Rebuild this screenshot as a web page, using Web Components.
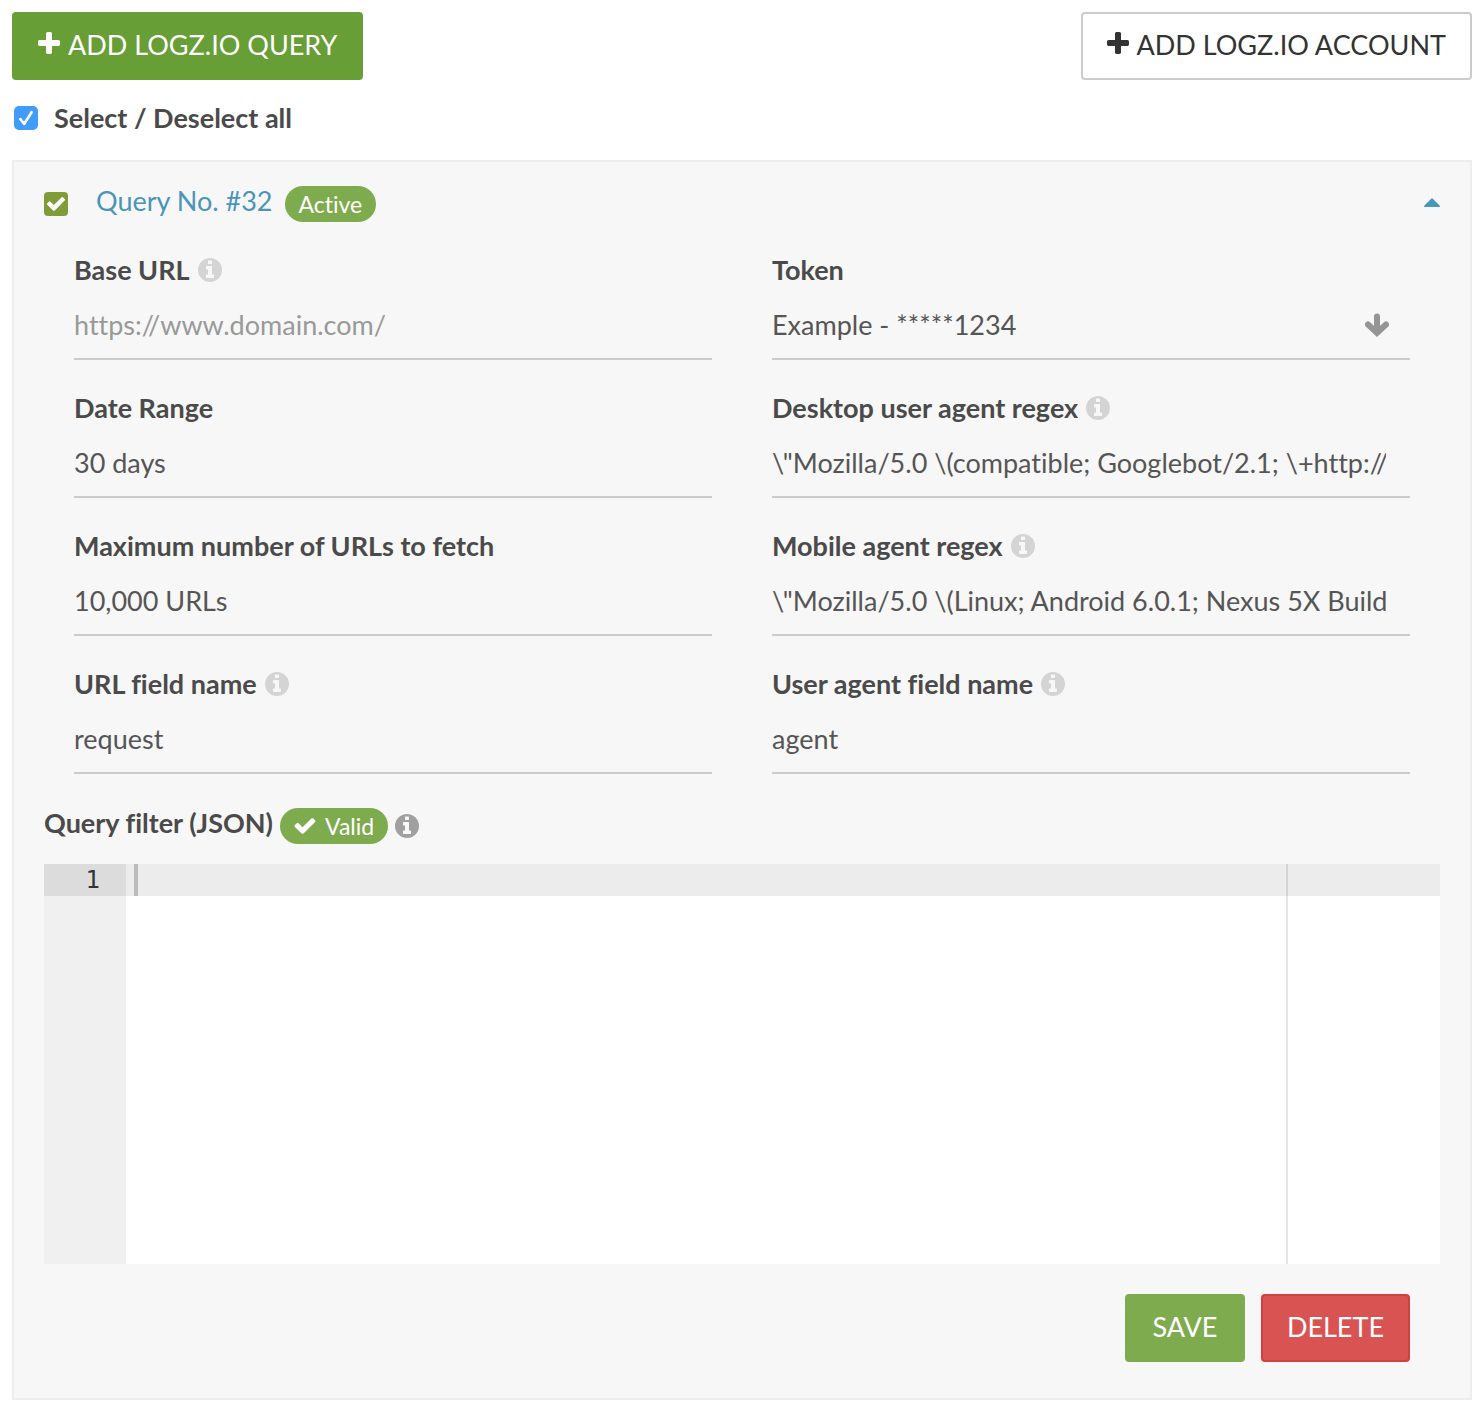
<!DOCTYPE html>
<html lang="en">
<head>
<meta charset="utf-8">
<meta name="viewport" content="width=device-width, initial-scale=1">
<title>Logz.io queries</title>
<style>
  body { margin: 0; background: #fff; color: #4a4a4a; font: 27px/32px Lato, "Open Sans", sans-serif; font-variant-ligatures: none; }
</style>
</head>
<body>
<query-page></query-page>
<script>
const ICONS = {
  plus: ['192 128 1408 1408', 'M1600 736v192q0 40-28 68t-68 28h-416v416q0 40-28 68t-68 28h-192q-40 0-68-28t-28-68v-416h-416q-40 0-68-28t-28-68v-192q0-40 28-68t68-28h416v-416q0-40 28-68t68-28h192q40 0 68 28t28 68v416h416q40 0 68 28t28 68z'],
  check: ['121 334 1550 1188', 'M1671 566q0 40-28 68l-724 724-136 136q-28 28-68 28t-68-28l-136-136-362-362q-28-28-28-68t28-68l136-136q28-28 68-28t68 28l294 295 656-657q28-28 68-28t68 28l136 136q28 28 28 68z'],
  info: ['128 128 1536 1536', 'M128 896a768 768 0 1 0 1536 0a768 768 0 1 0-1536 0zM1152 1376v-160q0-14-9-23t-23-9h-96v-512q0-14-9-23t-23-9h-320q-14 0-23 9t-9 23v160q0 14 9 23t23 9h96v320h-96q-14 0-23 9t-9 23v160q0 14 9 23t23 9h448q14 0 23-9t9-23zM1024 480v-160q0-14-9-23t-23-9h-192q-14 0-23 9t-9 23v160q0 14 9 23t23 9h192q14 0 23-9t9-23z'],
  caret: ['0 0 16 9', 'M8 0L15.6 7.6Q16.2 9 15 9H1Q-.2 9 .4 7.6z']
};

class Base extends HTMLElement {
  connectedCallback() {
    if (this.shadowRoot) return;
    this.attachShadow({ mode: 'open' }).innerHTML =
      `<style>*{box-sizing:border-box}${this.css()}</style>${this.html()}`;
  }
  attr(name) { return (this.getAttribute(name) || '').replace(/&/g, '&amp;').replace(/"/g, '&quot;'); }
}

customElements.define('ui-icon', class extends Base {
  css() { return `:host{display:block;flex:none}svg{display:block;width:100%;height:100%;fill:currentColor;fill-rule:evenodd}`; }
  html() {
    const [box, d] = ICONS[this.getAttribute('name')];
    return `<svg viewBox="${box}" aria-hidden="true"><path d="${d}"/></svg>`;
  }
});

customElements.define('ui-button', class extends Base {
  css() { return `
    :host{display:block}
    button{display:flex;align-items:center;justify-content:center;gap:8px;min-width:120px;height:68px;padding:0 24px 2px;
      border:2px solid #679e36;border-radius:4px;background:#679e36;color:#fff;font:inherit;white-space:nowrap;cursor:pointer}
    ui-icon{width:22px;height:22px;margin-bottom:4px}
    :host([kind=default]) button{background:#fff;border-color:#ccc;color:#333}
    :host([kind=save]) button{background:#7fab4f;border-color:#7fab4f}
    :host([kind=danger]) button{background:#d95353;border-color:#d43f3f}`; }
  html() {
    const icon = this.getAttribute('icon');
    return `<button type="button">${icon ? `<ui-icon name="${icon}"></ui-icon>` : ''}<slot></slot></button>`;
  }
});

customElements.define('ui-check', class extends Base {
  css() { return `
    :host{display:block;font-weight:700}
    label{display:flex;align-items:center;gap:16px}
    .box{display:grid;width:24px;height:24px}
    input,svg,ui-icon{grid-area:1/1}
    input{appearance:none;width:24px;height:24px;margin:0;border-radius:5px;background:#419bf9}
    svg{width:24px;height:24px;fill:none;stroke:#fff;stroke-width:2.6;stroke-linecap:round;stroke-linejoin:round;pointer-events:none}
    ui-icon{place-self:center;width:18px;height:14px;color:#fff;pointer-events:none}
    :host([kind=green]) input{background:#809c38;border-radius:4px}`; }
  html() {
    const mark = this.getAttribute('kind') === 'green'
      ? '<ui-icon name="check"></ui-icon>'
      : '<svg viewBox="0 0 24 24"><path d="M6.3 13.2L10.3 17.8L17.6 6.2"/></svg>';
    return `<label><span class="box"><input type="checkbox" checked aria-label="${this.attr('name')}">${mark}</span><slot></slot></label>`;
  }
});

customElements.define('ui-badge', class extends Base {
  css() { return `
    :host{display:flex;align-items:center;gap:9px;height:36px;padding:0 14px;border-radius:18px;background:#7fab4f;color:#fff;
      font-size:23px;font-weight:400;white-space:nowrap}
    ui-icon{width:22px;height:16px}`; }
  html() {
    const icon = this.getAttribute('icon');
    return `${icon ? `<ui-icon name="${icon}"></ui-icon>` : ''}<slot></slot>`;
  }
});

customElements.define('ui-field', class extends Base {
  css() { return `
    :host{display:block;min-width:0}
    .head{display:flex;align-items:center;gap:8px;height:32px;margin-bottom:6px}
    label{font-weight:700;white-space:nowrap}
    .head ui-icon{width:24px;height:24px;color:#d4d4d4}
    .control{display:grid;align-items:center;height:68px;padding-right:24px;border-bottom:2px solid #ccc}
    input,select,svg{grid-area:1/1}
    input,select{appearance:none;width:100%;height:64px;margin:0;padding:0;border:0;border-radius:0;outline:0;
      background:none;color:#555;font:inherit;font-variant-ligatures:none}
    input{padding-bottom:2px}
    input::placeholder{color:#999;opacity:1}
    svg{justify-self:end;width:24px;height:24px;margin-right:-3px;fill:none;stroke:#959595;stroke-width:6;stroke-linecap:round;pointer-events:none}`; }
  html() {
    const hint = this.hasAttribute('hint') ? '<ui-icon name="info"></ui-icon>' : '';
    const control = this.hasAttribute('select')
      ? `<select id="f"><option>${this.attr('value')}</option></select>
         <svg viewBox="0 0 24 24"><path d="M12 3.5V17M3 11.5L12 19.8L21 11.5"/></svg>`
      : `<input id="f" type="text" value="${this.attr('value')}" placeholder="${this.attr('placeholder')}">`;
    return `<div class="head"><label for="f">${this.attr('label')}</label>${hint}</div><div class="control">${control}</div>`;
  }
});

customElements.define('json-editor', class extends Base {
  css() { return `
    :host{display:flex;height:400px;background:#fff}
    .gutter{flex:none;width:82px;background:#f0f0f0}
    .num{height:32px;padding-right:26px;background:#dcdcdc;color:#333;text-align:right;font:24px/32px "DejaVu Sans Mono",monospace}
    .code{flex:1;min-width:0;background:linear-gradient(#ececec,#ececec) 0 0/100% 32px no-repeat}
    .page{display:flex;width:1162px;max-width:100%;height:100%;padding-left:8px;border-right:2px solid rgba(0,0,0,.1)}
    .cursor{flex:none;width:4px;height:32px;background:#bbb}
    textarea{flex:1;min-width:0;padding:0;border:0;outline:0;resize:none;background:none;font:24px/32px "DejaVu Sans Mono",monospace}`; }
  html() { return `<div class="gutter"><div class="num">1</div></div>
    <div class="code"><div class="page"><span class="cursor"></span><textarea aria-label="Query filter (JSON)" spellcheck="false"></textarea></div></div>`; }
});

customElements.define('query-card', class extends Base {
  css() { return `
    :host{display:block;padding:24px 30px 36px;border:2px solid #ededed;background:#f7f7f7}
    header{display:flex;align-items:center;height:36px}
    header a{display:block;margin:0 12px 6px 28px;color:#4b95b9;text-decoration:none}
    .toggle{display:block;margin:0 0 4px auto;padding:0;border:0;background:none;color:#4b95b9}
    .toggle ui-icon{width:16px;height:9px}
    .fields{display:grid;grid-template-columns:1fr 1fr;gap:32px 60px;padding:32px 30px 0}
    .filter{display:flex;align-items:center;gap:7px;height:36px;margin:34px 0 20px}
    h2{margin:0 0 6px;font-size:27px;line-height:32px;font-weight:700}
    .filter > ui-icon{width:24px;height:24px;color:#a0a0a0}
    footer{display:flex;justify-content:flex-end;gap:16px;padding:30px 30px 0}`; }
  html() { return `
    <header>
      <ui-check kind="green" name="Query No. #32"></ui-check>
      <a href="#query-32">Query No. #32</a>
      <ui-badge>Active</ui-badge>
      <button class="toggle" type="button" aria-label="Collapse"><ui-icon name="caret"></ui-icon></button>
    </header>
    <div class="fields"><slot></slot></div>
    <div class="filter"><h2>Query filter (JSON)</h2><ui-badge icon="check">Valid</ui-badge><ui-icon name="info"></ui-icon></div>
    <json-editor></json-editor>
    <footer><ui-button kind="save">SAVE</ui-button><ui-button kind="danger">DELETE</ui-button></footer>`; }
});

customElements.define('query-page', class extends Base {
  css() { return `
    :host{display:block;padding:12px}
    .bar{display:flex;justify-content:space-between}
    ui-check{margin:22px 2px 26px}`; }
  html() { return `
    <div class="bar"><ui-button icon="plus">ADD LOGZ.IO QUERY</ui-button><ui-button kind="default" icon="plus">ADD LOGZ.IO ACCOUNT</ui-button></div>
    <ui-check name="Select / Deselect all">Select / Deselect all</ui-check>
    <query-card>
      <ui-field label="Base URL" hint placeholder="https://www.domain.com/"></ui-field>
      <ui-field label="Token" select value="Example - *****1234"></ui-field>
      <ui-field label="Date Range" value="30 days"></ui-field>
      <ui-field label="Desktop user agent regex" hint value="\\&quot;Mozilla/5.0 \\(compatible; Googlebot/2.1; \\+http://www.google.com/bot.html\\)"></ui-field>
      <ui-field label="Maximum number of URLs to fetch" value="10,000 URLs"></ui-field>
      <ui-field label="Mobile agent regex" hint value="\\&quot;Mozilla/5.0 \\(Linux; Android 6.0.1; Nexus 5X Build/MMB29P\\)"></ui-field>
      <ui-field label="URL field name" hint value="request"></ui-field>
      <ui-field label="User agent field name" hint value="agent"></ui-field>
    </query-card>`; }
});
</script>
</body>
</html>
